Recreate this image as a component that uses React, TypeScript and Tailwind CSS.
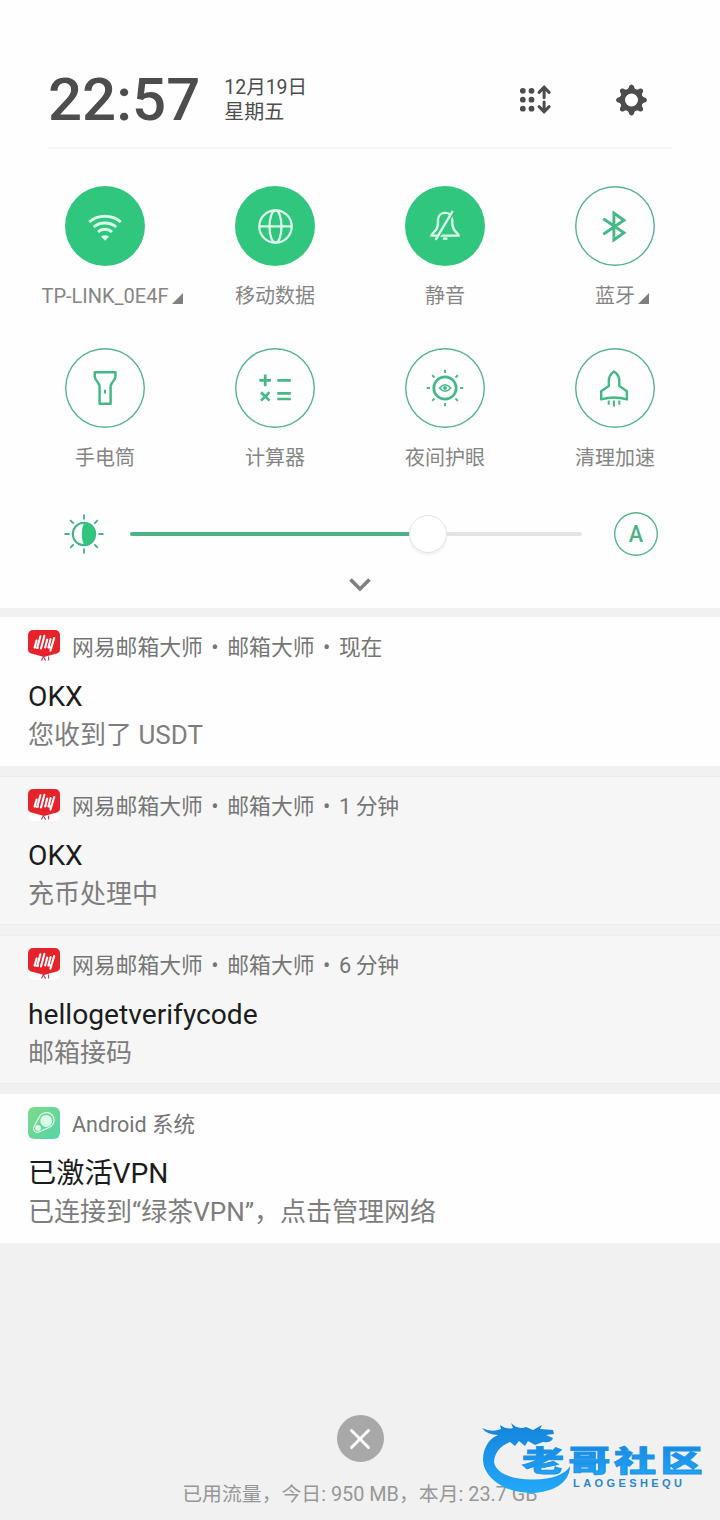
import React from "react";
import { clsx } from "clsx";

const WifiIcon = () => (
  <g fill="none" stroke="#dcfbea" strokeWidth="2.9">
    <path d="M24.3 36C33 28.3 47 28.3 55.7 36" />
    <path d="M28.8 41C35 35.6 45 35.6 51.2 41" />
    <path d="M33 46C37 42.3 43 42.3 47 46" />
    <path d="M36 50.6Q40 48 44 50.6L40 54.8Z" fill="#dcfbea" stroke="none" />
  </g>
);

const GlobeIcon = () => (
  <g fill="none" stroke="#dcfbea" strokeWidth="2.3">
    <circle cx="40.5" cy="40.5" r="16.2" />
    <ellipse cx="40.5" cy="40.5" rx="6" ry="16.2" />
    <path d="M24.5 40.3H56.5" />
  </g>
);

const MuteIcon = () => (
  <g fill="none" stroke="#dcfbea" strokeWidth="2.4">
    <path d="M26.5 49.6C26.5 46.5 33 46 33 37V34C33 24.5 47.3 24.5 47.3 34V37C47.3 46 53.6 46.5 53.6 49.6Z" />
    <path d="M38 52.6H42.4" />
    <path d="M49.2 26L31.8 55" stroke="#31c67e" strokeWidth="1.6" />
    <path d="M47.7 25L30.6 53.8" />
  </g>
);

const BluetoothIcon = () => (
  <path d="M28.3 32.8L49 46.7L38.9 54V27L49 34.3L28.3 48.2" fill="none" stroke="#45b985" strokeWidth="2.9" />
);

const TorchIcon = () => (
  <g fill="none" stroke="#45b985" strokeWidth="2.5" strokeLinejoin="round">
    <path d="M29.8 24.2H50.4V28.8C50.4 33 45.6 34 45.6 38.5V55.8H34.6V38.5C34.6 34 29.8 33 29.8 28.8Z" />
    <path d="M40 41.8V45.6" strokeWidth="2" />
  </g>
);

const CalculatorIcon = () => (
  <path
    d="M24.3 32.4H36M30.2 26.5V38.3M42.3 32.4H55.8M26 44.3L34.5 52.6M34.5 44.3L26 52.6M42.3 45.4H55.8M42.3 51H55.8"
    fill="none"
    stroke="#45b985"
    strokeWidth="2.7"
  />
);

const EyeIcon = () => (
  <g fill="none" stroke="#45b985" strokeWidth="2.7">
    <circle cx="40" cy="40" r="11.2" />
    <path d="M34.6 40Q40 33.4 45.8 40Q40 46.6 34.6 40Z" strokeWidth="1.6" />
    <circle cx="40" cy="40" r="1.9" fill="#45b985" stroke="none" />
    <path
      d="M40 21.8V25M40 55V58.2M21.8 40H25M55 40H58.2M27.2 27.2L29.5 29.5M50.5 50.5L52.8 52.8M27.2 52.8L29.5 50.5M50.5 29.5L52.8 27.2"
      strokeWidth="1.9"
    />
  </g>
);

const RocketIcon = () => (
  <g fill="none" stroke="#45b985" strokeWidth="2.4" strokeLinejoin="round">
    <path d="M39 23.4C36 25.5 33.8 29 33.8 32.5V38L26.2 43.2V51.4Q39 47.6 51.9 51.4V43.2L44.3 38V32.5C44.3 29 42 25.5 39 23.4Z" />
    <path d="M33.7 52.5V56.8M39 52.5V58.4M44.3 52.5V56.8" strokeWidth="2" />
  </g>
);

const TILES = [
  { label: "TP-LINK_0E4F", icon: WifiIcon, on: true, more: true },
  { label: "移动数据", icon: GlobeIcon, on: true },
  { label: "静音", icon: MuteIcon, on: true },
  { label: "蓝牙", icon: BluetoothIcon, more: true },
  { label: "手电筒", icon: TorchIcon },
  { label: "计算器", icon: CalculatorIcon },
  { label: "夜间护眼", icon: EyeIcon },
  { label: "清理加速", icon: RocketIcon },
];

const MailIcon = () => (
  <svg className="size-8 shrink-0" viewBox="0 0 32 32">
    <rect width="32" height="32" rx="6" fill="#fff" />
    <path d="M0 5.5Q0 0 5.5 0H26.5Q32 0 32 5.5V20Q32 22.4 29.5 23.2L16 27L2.5 23.2Q0 22.4 0 20Z" fill="#e6232b" />
    <g fill="none" stroke="#fff" strokeWidth="2.1" strokeLinecap="round">
      <path d="M8.6 10.5L6.6 17.6M12.4 6.2L9.2 18M8.6 17.8H10" />
      <path d="M16.4 5.8L13 18.4M19.2 9.6L17.2 17.4" />
      <path d="M22.6 9L20.4 17.4M26.2 8L22.4 20.6M20.4 17.4H22.6" />
    </g>
    <path d="M13.4 30.6L15.4 26.8L17.6 30.6M20.6 26.6V30.4" fill="none" stroke="#b5444a" strokeWidth="1.1" />
  </svg>
);

const AndroidIcon = () => (
  <svg className="size-8 shrink-0" viewBox="0 0 32 32">
    <defs>
      <linearGradient id="sys" x1="0" y1="0" x2="1" y2="1">
        <stop offset="0" stopColor="#7cdb86" />
        <stop offset="1" stopColor="#57d3ac" />
      </linearGradient>
    </defs>
    <rect width="32" height="32" rx="6" fill="url(#sys)" />
    <path
      d="M12.3 8.2C16 4.6 21.8 4.8 24.6 8.6C27.6 12.6 26 18.6 21 20.4L11 25C7 26.4 4.4 23 6 19.6Z"
      fill="none"
      stroke="#e0fbea"
      strokeWidth="1.1"
    />
    <circle cx="18.2" cy="14" r="5.9" fill="#dcfae8" />
    <circle cx="10" cy="21" r="2.9" fill="#dcfae8" />
  </svg>
);

const NOTICES = [
  { icon: MailIcon, head: ["网易邮箱大师", "邮箱大师", "现在"], title: "OKX", text: "您收到了 USDT" },
  { icon: MailIcon, head: ["网易邮箱大师", "邮箱大师", "1 分钟"], title: "OKX", text: "充币处理中", dim: true },
  { icon: MailIcon, head: ["网易邮箱大师", "邮箱大师", "6 分钟"], title: "hellogetverifycode", text: "邮箱接码", dim: true },
  { icon: AndroidIcon, head: ["Android 系统"], title: "已激活VPN", text: "已连接到“绿茶VPN”，点击管理网络" },
];

function Header() {
  return (
    <header className="mx-12 flex h-[149px] items-end border-b-2 border-[#f7f7f7] pb-[15px] text-[#4d4d4d]">
      <div className="text-[60px] font-medium leading-[64px]">22:57</div>
      <div className="mb-[8px] ml-[24px] text-[20px] leading-[24px]">
        <div className="text-[19.5px]">12月19日</div>
        <div>星期五</div>
      </div>
      <div className="mb-[16px] ml-auto flex gap-[64px] pr-6">
        <svg className="size-8" viewBox="0.5 0 32 32" fill="#4d4d4d">
          {[6.3, 15.2, 24.2].map((y) => (
            <g key={y}>
              <circle cx="3.3" cy={y + 0.5} r="2.9" />
              <circle cx="12" cy={y + 0.5} r="2.9" />
            </g>
          ))}
          <path
            d="M24.6 13.4V4M19.6 8.4L24.6 3.2L29.6 8.4M24.6 18V27M19.6 22.6L24.6 27.8L29.6 22.6"
            fill="none"
            stroke="#4d4d4d"
            strokeWidth="3"
            strokeLinecap="round"
          />
        </svg>
        <svg className="size-8" viewBox="-15.5 -16 32 32">
          <circle r="9" fill="none" stroke="#4d4d4d" strokeWidth="5" />
          {[0, 45, 90, 135, 180, 225, 270, 315].map((a) => (
            <path
              key={a}
              d="M-4.4 -10.2Q-2.6 -11.6 -2.3 -14Q0 -17 2.3 -14Q2.6 -11.6 4.4 -10.2Z"
              fill="#4d4d4d"
              transform={`rotate(${a})`}
            />
          ))}
        </svg>
      </div>
    </header>
  );
}

function Brightness() {
  return (
    <div className="flex h-11 items-center pl-16 pr-[62px]">
      <svg className="size-10" viewBox="0 0 40 40" fill="none" stroke="#45b085">
        <circle cx="20" cy="20" r="11.2" strokeWidth="2" />
        <path d="M20 8.8A11.2 11.2 0 0 1 20 31.2Q15.4 20 20 8.8Z" fill="#31c67e" stroke="none" />
        <path
          d="M20 .5V5.5M20 34.5V39.5M.5 20H5.5M34.5 20H39.5M6.2 6.2L9.7 9.7M30.3 30.3L33.8 33.8M6.2 33.8L9.7 30.3M30.3 9.7L33.8 6.2"
          strokeWidth="1.8"
        />
      </svg>
      <div className="ml-[26px] flex flex-1 items-center">
        <div className="h-1 w-[279px] rounded-l-full bg-[#4cb286]" />
        <div className="size-[38px] rounded-full border border-[#e4e4e4] bg-white shadow-[0_2px_3px_rgba(0,0,0,0.06)]" />
        <div className="h-1 flex-1 rounded-r-full bg-[#e3e3e3]" />
      </div>
      <div className="ml-8 flex size-11 items-center justify-center rounded-full text-[24px] font-medium leading-8 text-[#4cb286] shadow-[inset_0_0_0_1.4px_#55b48d]">
        <span className="scale-x-90">A</span>
      </div>
    </div>
  );
}

function Watermark() {
  return (
    <svg className="absolute bottom-0 right-0 h-[110px] w-[250px]" viewBox="0 0 250 110">
      <defs>
        <linearGradient id="wm" x1="0" y1="0" x2="0" y2="1">
          <stop offset="0" stopColor="#1583dc" />
          <stop offset="1" stopColor="#22a9fa" />
        </linearGradient>
      </defs>
      <path
        d="M12 18Q22 23 31 19L30 15Q37 20 43 18L41 13Q48 20 56 17L63 20L72 15L70 19L83 20L84 24L76 25L83 28Q82 33 73 32L65 35L58 31L55 36L49 31L45 36L40 32Q25 38 24 52C26 64 44 70 64 69.5C82 69 95 65 100 56C100 70 88 79 72 82C40 87 14 70 13 50C13 37 20 28 28 25Q17 25 12 18Z"
        fill="url(#wm)"
      />
      <g
        transform="scale(1.45 1)"
        fill="url(#wm)"
        stroke="#1b93e8"
        strokeWidth="0.9"
        fontFamily="'Noto Sans CJK SC', sans-serif"
        fontWeight="900"
        fontSize="29"
      >
        <text x="35.8 67.8 99.4 131.4" y="62.3">老哥社区</text>
      </g>
      <text
        x="103"
        y="77"
        textLength="109"
        fill="#2b86cc"
        fontFamily="'Liberation Sans', sans-serif"
        fontWeight="700"
        fontSize="11"
      >
        LAOGESHEQU
      </text>
    </svg>
  );
}

export default function App() {
  return (
    <div className="relative flex h-[1520px] w-[720px] flex-col overflow-hidden bg-[#f1f1f1] font-[Roboto,'Noto_Sans_CJK_SC',sans-serif]">
      <section className="h-[608px] bg-[#fefefe]">
        <Header />
        <ul className="grid grid-cols-4 px-5 pt-[37px] pb-[2px]">
          {TILES.map((tile) => (
            <li key={tile.label} className="flex h-[162px] flex-col items-center">
              <div
                className={clsx(
                  "size-20 rounded-full",
                  tile.on ? "bg-[#31c67e]" : "shadow-[inset_0_0_0_1.4px_#55b48d]"
                )}
              >
                <svg className="size-20" viewBox="0 0 80 80">
                  <tile.icon />
                </svg>
              </div>
              <div className="relative mt-[18px] whitespace-nowrap text-[20px] leading-6 text-[#858585]">
                {tile.label}
                {tile.more && (
                  <svg className="absolute bottom-[4px] left-full ml-[3px] size-[11px]" viewBox="0 0 12 12">
                    <path d="M12 0V12H0Z" fill="#808080" />
                  </svg>
                )}
              </div>
            </li>
          ))}
        </ul>
        <Brightness />
        <svg className="mx-auto mt-[21px] h-4 w-6" viewBox="0 0 24 16">
          <path d="M2.5 2.5L12 12L21.5 2.5" fill="none" stroke="#808080" strokeWidth="3.6" />
        </svg>
      </section>

      <ul className="mt-[9px] flex flex-col gap-[10px]">
        {NOTICES.map((n, i) => (
          <li
            key={i}
            className={clsx(
              "h-[149px] px-7",
              n.dim ? "border-y border-[#ebebeb] bg-[#f6f6f6] pt-[12px]" : "bg-[#fefefe] pt-[13px]"
            )}
          >
            <div className="flex h-8 items-center text-[21.8px] leading-8 text-[#757575]">
              <n.icon />
              <div className="ml-3 flex pt-[4px]">
                {n.head.map((part, k) => (
                  <React.Fragment key={part}>
                    {k > 0 && <span className="w-[24.5px] text-center">•</span>}
                    <span className={clsx(k === 2 && "tracking-[-0.4px]", n.head.length === 1 && "text-[21.5px]")}>
                      {part}
                    </span>
                  </React.Fragment>
                ))}
              </div>
            </div>
            <h3 className="mt-[17px] text-[28.2px] leading-9 text-[#1c1c1c]">{n.title}</h3>
            <p className="mt-[2px] text-[26px] leading-9 text-[#7d7d7d]">{n.text}</p>
          </li>
        ))}
      </ul>

      <footer className="mt-auto flex flex-col items-center pb-[13px]">
        <div className="flex size-[47px] items-center justify-center rounded-full bg-[#a8a8a8]">
          <svg className="size-6" viewBox="0 0 24 24">
            <path d="M3.5 3.5L20.5 20.5M20.5 3.5L3.5 20.5" stroke="#fff" strokeWidth="3" strokeLinecap="round" />
          </svg>
        </div>
        <p className="mt-[21px] text-[19.85px] leading-6 text-[#979797]">已用流量，今日: 950 MB，本月: 23.7 GB</p>
      </footer>
      <Watermark />
    </div>
  );
}
